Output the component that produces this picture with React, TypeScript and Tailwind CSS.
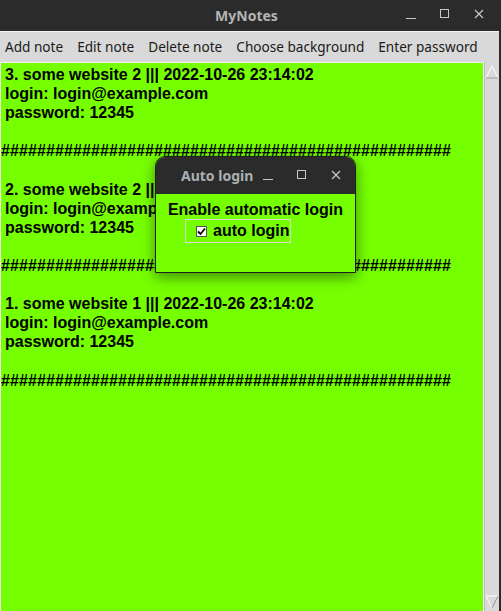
import React from "react";

const HASH = "#".repeat(50);

const lines: string[] = [
  "3. some website 2 ||| 2022-10-26 23:14:02",
  "login: login@example.com",
  "password: 12345",
  "",
  HASH,
  "",
  "2. some website 2 ||| 2022-10-26 23:14:02",
  "login: login@example.com",
  "password: 12345",
  "",
  HASH,
  "",
  "1. some website 1 ||| 2022-10-26 23:14:02",
  "login: login@example.com",
  "password: 12345",
  "",
  HASH,
];

function WinButtons({ gap }: { gap: string }) {
  return (
    <div className={`flex items-center ${gap}`}>
      <svg width="12" height="12" viewBox="0 0 12 12">
        <line x1="1" y1="10.5" x2="11" y2="10.5" stroke="#c8c8c8" strokeWidth="1" />
      </svg>
      <svg width="12" height="12" viewBox="0 0 12 12">
        <rect x="1.5" y="1.5" width="8" height="8" fill="none" stroke="#c8c8c8" strokeWidth="1" />
      </svg>
      <svg width="12" height="12" viewBox="0 0 12 12">
        <path d="M2 2 L10 10 M10 2 L2 10" stroke="#c8c8c8" strokeWidth="1.2" />
      </svg>
    </div>
  );
}

export default function App() {
  return (
    <div
      className="relative w-[501px] h-[611px] bg-[#2b2b2b] flex flex-col overflow-hidden"
      style={{ fontFamily: '"Liberation Sans", Arial, sans-serif' }}
    >
      {/* title bar */}
      <div className="relative h-[31px] shrink-0 flex items-center justify-center">
        <span
          className="text-[14px] font-bold text-[#b4b4b4] ml-[-8px]"
          style={{ fontFamily: '"Noto Sans", "DejaVu Sans", sans-serif' }}
        >
          MyNotes
        </span>
        <div className="absolute right-[16px] top-[8px]">
          <WinButtons gap="gap-[22px]" />
        </div>
      </div>
      {/* body */}
      <div className="flex-1 flex flex-col mr-[2px] bg-[#d9d9d9]">
        {/* menu */}
        <div
          className="h-[31px] shrink-0 flex items-center gap-[14px] pl-[5px] border-t border-[#f2f2f2] text-[13.6px] text-[#1a1a1a]"
          style={{ fontFamily: '"Noto Sans", "DejaVu Sans", sans-serif' }}
        >
          <span>Add note</span>
          <span>Edit note</span>
          <span>Delete note</span>
          <span>Choose background</span>
          <span>Enter password</span>
        </div>
        {/* content */}
        <div className="flex-1 flex">
          <div className="flex-1 bg-[#76ff00] border-t border-l border-r border-[#f0f0f0] pl-[4px] pt-[2px] text-[16px] font-bold leading-[19.1px] text-black whitespace-pre">
            {lines.map((l, i) => (
              <div key={i} className={l.startsWith("#") ? "ml-[-4px] tracking-[0.1px]" : ""}>
                {l || " "}
              </div>
            ))}
          </div>
          {/* scrollbar */}
          <div className="w-[15px] flex flex-col justify-between bg-[#d9d9d9] border-l border-[#bfbfbf] pt-[2px] pb-[1px]">
            <svg width="14" height="16" viewBox="0 0 14 16">
              <polygon points="7,2 13,14 1,14" fill="#d9d9d9" stroke="#ffffff" strokeWidth="1" />
              <polyline points="13,14 1,14" fill="none" stroke="#8a8a8a" strokeWidth="1" />
            </svg>
            <svg width="14" height="16" viewBox="0 0 14 16">
              <polygon points="1,2 13,2 7,14" fill="#d9d9d9" stroke="#ffffff" strokeWidth="1" />
              <polyline points="13,2 7,14" fill="none" stroke="#8a8a8a" strokeWidth="1" />
            </svg>
          </div>
        </div>
      </div>

      {/* dialog */}
      <div className="absolute left-[155px] top-[156px] w-[201px] h-[117px] flex flex-col rounded-t-[10px] overflow-hidden shadow-[0_4px_14px_rgba(0,0,0,0.45)] border border-[#1f1f1f]">
        <div className="relative h-[37px] shrink-0 bg-[#2b2b2b] flex items-center">
          <span
            className="ml-[25px] text-[14px] font-bold text-[#a9b0b5]"
            style={{ fontFamily: '"Noto Sans", "DejaVu Sans", sans-serif' }}
          >
            Auto login
          </span>
          <div className="absolute left-[106px] top-[12px]">
            <WinButtons gap="gap-[22px]" />
          </div>
        </div>
        <div className="flex-1 bg-[#76ff00] flex flex-col items-center pt-[6px]">
          <div className="text-[16px] font-bold leading-[19px] text-black">Enable automatic login</div>
          <div className="self-start mt-[0px] ml-[29px] w-[106px] h-[24px] border border-[#d8d8d8] flex items-center pl-[10px]">
            <div className="w-[11px] h-[11px] bg-white border border-[#555] flex items-center justify-center">
              <svg width="9" height="9" viewBox="0 0 9 9">
                <path d="M1 4.5 L3.5 7 L8 1.5" fill="none" stroke="#000" strokeWidth="1.8" />
              </svg>
            </div>
            <span className="ml-[6px] text-[16px] font-bold text-black">auto login</span>
          </div>
        </div>
      </div>
    </div>
  );
}
